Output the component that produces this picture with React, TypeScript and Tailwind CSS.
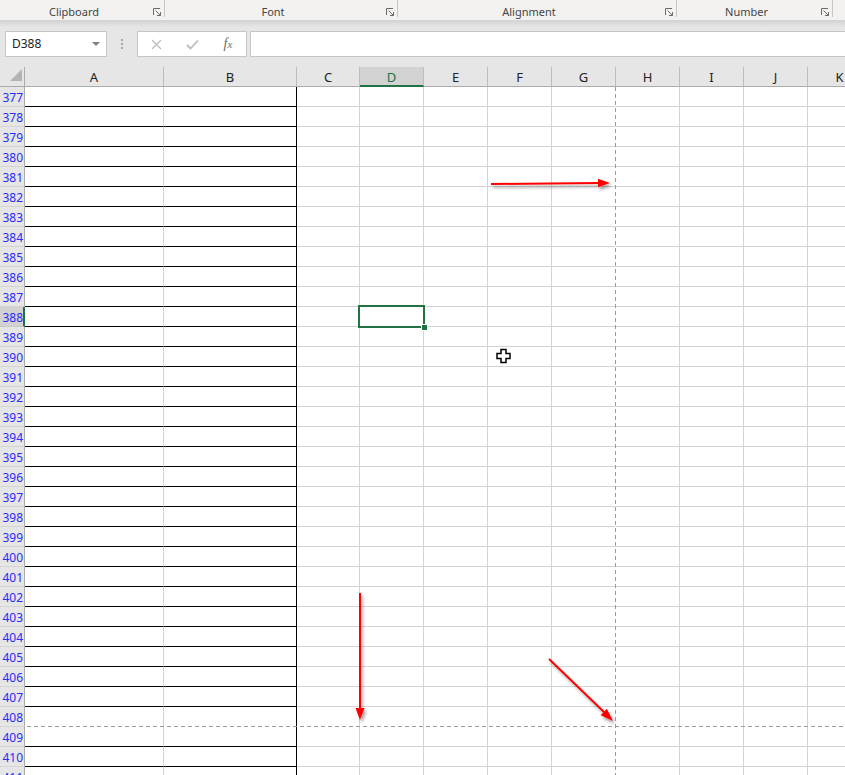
const cols = [
  { name: 'A', w: 'w-[139px]' },
  { name: 'B', w: 'w-[133px]' },
  { name: 'C', w: 'w-[63px]' },
  { name: 'D', w: 'w-[64px]' },
  { name: 'E', w: 'w-[64px]' },
  { name: 'F', w: 'w-[64px]' },
  { name: 'G', w: 'w-[64px]' },
  { name: 'H', w: 'w-[64px]' },
  { name: 'I', w: 'w-[64px]' },
  { name: 'J', w: 'w-[64px]' },
  { name: 'K', w: 'w-[64px]' },
];

const rows = Array.from({ length: 35 }, (_, i) => 377 + i);

const groups = [
  { label: 'Clipboard', w: 'w-[165px]' },
  { label: 'Font', w: 'w-[233px]' },
  { label: 'Alignment', w: 'w-[279px]' },
  { label: 'Number', w: 'w-[156px]' },
];

function Launcher() {
  return (
    <svg width="9" height="9" viewBox="0 0 9 9" className="absolute right-[2px] top-[8px]">
      <path d="M0.5 7 V0.5 H7" fill="none" stroke="#6b6b6b" strokeWidth="1" />
      <path d="M2.5 2.5 L7.5 7.5 M4 7.5 H7.5 V4" fill="none" stroke="#6b6b6b" strokeWidth="1" />
    </svg>
  );
}

function cellClass(row: number, col: string) {
  const ab = col === 'A' || col === 'B';
  let right = 'border-r-[#d4d4d4]';
  if (col === 'B') right = 'border-r-black';
  if (col === 'G') right = 'border-r-transparent';
  let bottom = ab ? 'border-b-black' : 'border-b-[#d4d4d4]';
  if (row === 408) bottom = 'border-b-transparent';
  return `${right} ${bottom}`;
}

export default function App() {
  return (
    <div className="relative w-[845px] h-[775px] overflow-hidden bg-white font-['Noto_Sans',sans-serif]">
      {/* Ribbon group labels */}
      <div className="flex h-[20px] bg-[#f3f2f1]">
        {groups.map((g) => (
          <div
            key={g.label}
            className={`${g.w} relative flex justify-center pr-[16px] pt-[5px] border-r border-r-[#c8c6c4] h-[17px] shrink-0`}
          >
            <span className="text-[11px] leading-[14px] text-[#444]">{g.label}</span>
            <Launcher />
          </div>
        ))}
      </div>
      <div className="h-[7px] bg-gradient-to-b from-[#d2d2d2] to-[#e6e6e6]" />

      {/* Formula bar */}
      <div className="flex h-[40px] bg-[#e6e6e6] pt-[4px]">
        <div className="ml-[5px] w-[102px] h-[26px] bg-white border border-[#c6c6c6] flex items-center justify-between pl-[6px] pr-[6px]">
          <span className="text-[12px] text-[#222]">D388</span>
          <svg width="8" height="5" viewBox="0 0 8 5">
            <path d="M0 0 H8 L4 4 Z" fill="#808080" />
          </svg>
        </div>
        <div className="w-[30px] flex flex-col items-center justify-center gap-[2px] h-[26px]">
          <div className="w-[2px] h-[2px] bg-[#a6a6a6]" />
          <div className="w-[2px] h-[2px] bg-[#a6a6a6]" />
          <div className="w-[2px] h-[2px] bg-[#a6a6a6]" />
        </div>
        <div className="w-[110px] h-[26px] bg-white border border-[#c6c6c6] flex items-center">
          <div className="w-[36px] flex justify-center">
            <svg width="11" height="11" viewBox="0 0 11 11">
              <path d="M1 1 L10 10 M10 1 L1 10" stroke="#bdbdbd" strokeWidth="1.4" />
            </svg>
          </div>
          <div className="w-[36px] flex justify-center">
            <svg width="13" height="11" viewBox="0 0 13 11">
              <path d="M1 6 L4.5 9.5 L12 1.5" fill="none" stroke="#bdbdbd" strokeWidth="1.8" />
            </svg>
          </div>
          <div className="w-[36px] flex justify-center">
            <span className="font-['Liberation_Serif',serif] italic text-[14px] text-[#6b6b6b] leading-none">
              f<span className="text-[11px]">x</span>
            </span>
          </div>
        </div>
        <div className="ml-[3px] flex-1 h-[26px] bg-white border border-[#c6c6c6] border-r-0" />
      </div>

      {/* Column headers */}
      <div className="flex h-[20px] bg-[#e6e6e6]">
        <div className="w-[25px] shrink-0 border-r border-b border-r-[#ababab] border-b-[#ababab] relative">
          <svg width="14" height="14" viewBox="0 0 14 14" className="absolute left-[9px] top-[1px]">
            <path d="M13 1 V13 H1 Z" fill="#b4b4b4" />
          </svg>
        </div>
        {cols.map((c) =>
          c.name === 'D' ? (
            <div
              key={c.name}
              className={`${c.w} shrink-0 bg-[#d2d2d2] border-r border-r-[#bdbdbd] border-b-2 border-b-[#217346] flex justify-center pt-[2px] text-[13px] leading-[16px] text-[#217346]`}
            >
              {c.name}
            </div>
          ) : (
            <div
              key={c.name}
              className={`${c.w} shrink-0 border-r border-r-[#bdbdbd] border-b border-b-[#ababab] flex justify-center pt-[2px] text-[13px] leading-[16px] text-[#222]`}
            >
              {c.name}
            </div>
          )
        )}
      </div>

      {/* Grid rows */}
      {rows.map((r) => (
        <div key={r} className="flex h-[20px]">
          {r === 388 ? (
            <div className="w-[25px] shrink-0 bg-[#d2d2d2] border-r-2 border-r-[#217346] border-b border-b-[#c8c8c8] flex justify-end items-center pt-[2px] text-[12px] text-[#2a2aff]">
              {r}
            </div>
          ) : (
            <div className="w-[25px] shrink-0 bg-[#e6e6e6] border-r border-r-[#ababab] border-b border-b-[#d4d4d4] flex justify-end items-center pt-[2px] pr-[1px] text-[12px] text-[#2a2aff]">
              {r}
            </div>
          )}
          {cols.map((c) => (
            <div key={c.name} className={`${c.w} shrink-0 border-r border-b ${cellClass(r, c.name)} relative`}>
              {r === 388 && c.name === 'D' && (
                <div className="absolute z-10 left-[-2px] top-[-2px] w-[67px] h-[23px] border-2 border-[#217346]">
                  <div className="absolute right-[-5px] bottom-[-5px] w-[7px] h-[7px] bg-[#217346] border border-white" />
                </div>
              )}
            </div>
          ))}
        </div>
      ))}

      {/* Page breaks, arrows, cursor */}
      <svg className="absolute z-20 left-0 top-0 pointer-events-none" width="845" height="775" viewBox="0 0 845 775">
        <defs>
          <filter id="sh" x="-20%" y="-20%" width="140%" height="140%">
            <feDropShadow dx="2" dy="3" stdDeviation="1.5" floodColor="#000" floodOpacity="0.35" />
          </filter>
        </defs>
        <line x1="615.5" y1="87" x2="615.5" y2="775" stroke="#9a9a9a" strokeWidth="1" strokeDasharray="4 3" />
        <line x1="27" y1="726.5" x2="845" y2="726.5" stroke="#9a9a9a" strokeWidth="1" strokeDasharray="4 3" />
        <g filter="url(#sh)">
          <line x1="491" y1="184" x2="599" y2="183" stroke="#ff0000" strokeWidth="2" />
          <path d="M610 183 L598 178.8 L598 187.2 Z" fill="#ff0000" />
          <line x1="360" y1="593" x2="360" y2="709" stroke="#ff0000" strokeWidth="2" />
          <path d="M360 720 L355.5 708 L364.5 708 Z" fill="#ff0000" />
          <line x1="549" y1="659" x2="605" y2="713" stroke="#ff0000" strokeWidth="2" />
          <path d="M613 721 L600.6 715.2 L606.8 708.8 Z" fill="#ff0000" />
        </g>
        <path
          d="M501 349.5 H506 V353.5 H510 V358.5 H506 V362.5 H501 V358.5 H497 V353.5 H501 Z"
          fill="#fff"
          stroke="#000"
          strokeWidth="1.5"
        />
      </svg>
    </div>
  );
}
